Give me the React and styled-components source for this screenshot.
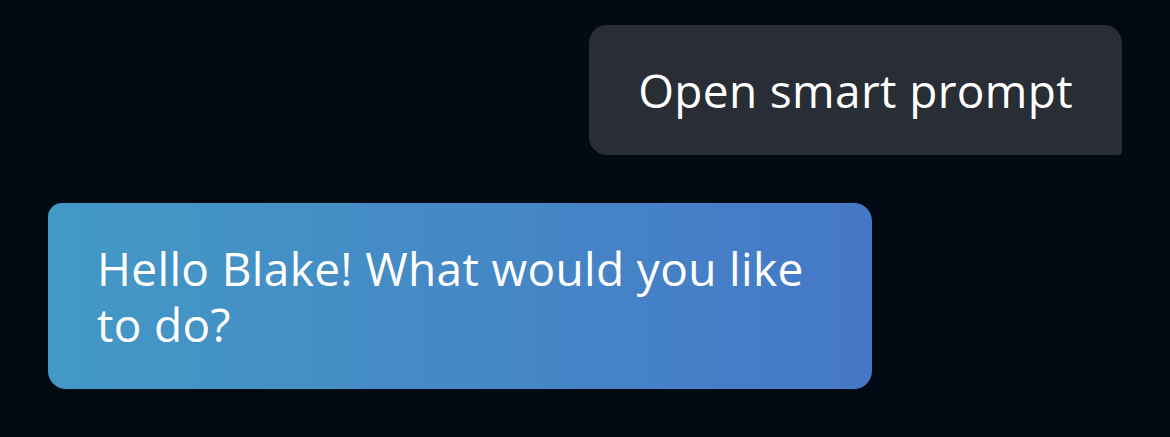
import React from 'react';
import styled, { createGlobalStyle } from 'styled-components';

const GlobalStyle = createGlobalStyle`
  html, body {
    margin: 0;
    padding: 0;
    background: #020a13;
  }
  body {
    font-family: 'Open Sans', 'Noto Sans', sans-serif;
  }
`;

const messages = [
  { from: 'user', text: 'Open smart prompt' },
  { from: 'alexa', text: 'Hello Blake! What would you like to do?' },
];

const App = () => (
  <>
    <GlobalStyle />
    <Thread>
      {messages.map((msg, idx) => (
        <Row key={idx} $user={msg.from === 'user'}>
          <Bubble $user={msg.from === 'user'}>{msg.text}</Bubble>
        </Row>
      ))}
    </Thread>
  </>
);

export default App;

const Thread = styled.div`
  width: 1170px;
  height: 437px;
  box-sizing: border-box;
  padding: 25px 48px;
  display: flex;
  flex-direction: column;
  gap: 48px;
  background: #020a13;
`;
const Row = styled.div`
  display: flex;
  justify-content: ${p => (p.$user ? 'flex-end' : 'flex-start')};
`;
const Bubble = styled.div`
  box-sizing: border-box;
  color: #ffffff;
  font-size: 46px;
  line-height: 56px;
  letter-spacing: 0.35px;
  ${p =>
    p.$user
      ? `
    background: #292d35;
    padding: 37px 49px;
    border-radius: 18px 18px 4px 18px;
  `
      : `
    width: 824px;
    background: linear-gradient(90deg, #4399c5 0%, #4589c6 50%, #4578c6 100%);
    padding: 37px 49px;
    border-radius: 14px 18px 18px 18px;
  `}
`;
